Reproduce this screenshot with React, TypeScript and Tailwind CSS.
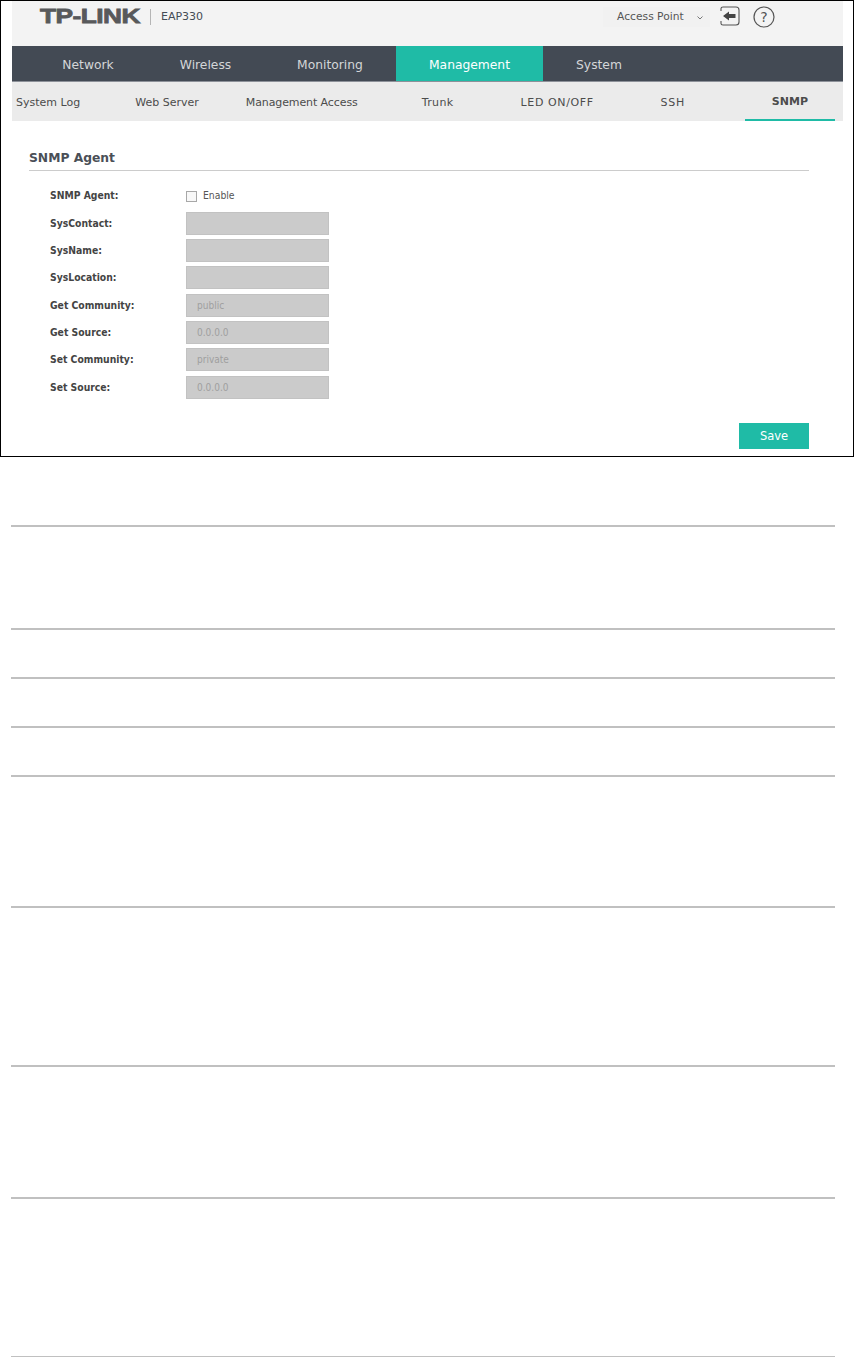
import React from 'react';

const FONT = 'font-["DejaVu_Sans","Liberation_Sans",sans-serif]';
const CONDENSED = "font-['DejaVu_Sans_Condensed','DejaVu_Sans',sans-serif]";

const tabs = [
  { label: 'Network', cls: 'w-[118px]' },
  { label: 'Wireless', cls: 'w-[117px]' },
  { label: 'Monitoring', cls: 'w-[132px]' },
  { label: 'Management', cls: 'w-[147px]' },
  { label: 'System', cls: 'w-[112px]' },
];

const subTabs = [
  { label: 'System Log', cls: 'ml-[4px]' },
  { label: 'Web Server', cls: 'ml-[55px]' },
  { label: 'Management Access', cls: 'ml-[47px] tracking-[-0.1px]' },
  { label: 'Trunk', cls: 'ml-[64px] tracking-[0.4px]' },
  { label: 'LED ON/OFF', cls: 'ml-[67px] tracking-[0.6px]' },
  { label: 'SSH', cls: 'ml-[67px] tracking-[0.7px]' },
];

const fields = [
  { label: 'SysContact:', value: '', cls: 'mt-[10px]' },
  { label: 'SysName:', value: '', cls: 'mt-[4px]' },
  { label: 'SysLocation:', value: '', cls: 'mt-[4px]' },
  { label: 'Get Community:', value: 'public', cls: 'mt-[5px]' },
  { label: 'Get Source:', value: '0.0.0.0', cls: 'mt-[4px]' },
  { label: 'Set Community:', value: 'private', cls: 'mt-[4px]' },
  { label: 'Set Source:', value: '0.0.0.0', cls: 'mt-[5px]' },
];

// heights of the empty table rows below the screenshot frame
const tableRows = ['h-[103px]', 'h-[49px]', 'h-[49px]', 'h-[49px]', 'h-[131px]', 'h-[159px]', 'h-[132px]', 'h-[159px]'];

function Header() {
  return (
    <div className="flex h-[45px] bg-[#f3f3f3] pl-[28px] pt-[6px]">
      <span className="h-[18px] w-[101px] origin-left scale-x-[1.25] font-['Liberation_Sans',sans-serif] text-[21px] leading-[18px] font-bold tracking-[-0.4px] whitespace-nowrap text-[#58595b] [-webkit-text-stroke:0.8px_#58595b]">
        TP-LINK
      </span>
      <div className="mt-[2px] ml-[9px] h-[16px] w-px bg-[#b5b5b5]" />
      <span className="mt-[2px] ml-[10px] text-[11px] leading-[16px] text-[#444b55]">EAP330</span>
      <div className="ml-[400px] flex h-[20px] w-[107px] items-center bg-[#f1f1f1] pl-[14px]">
        <span className="text-[10.7px] text-[#555]">Access Point</span>
        <svg className="mt-[2px] ml-[13px]" width="6" height="4" viewBox="0 0 6 4" fill="none">
          <path d="M0.5 0.5 L3 3 L5.5 0.5" stroke="#777" strokeWidth="1" />
        </svg>
      </div>
      <svg className="-mt-px ml-[10px]" width="20" height="20" viewBox="0 0 20 20" fill="none">
        <path d="M1 5 V2.5 Q1 1 3 1 H16 Q19 1 19 4 V16 Q19 19 16 19 H3 Q1 19 1 17.5 V15" stroke="#555" strokeWidth="1.1" />
        <path d="M3 10 L9 5.5 V8 H15.5 V12 H9 V14.5 Z" fill="#444" />
      </svg>
      <svg className="-mt-px ml-[13px]" width="22" height="22" viewBox="0 0 22 22" fill="none">
        <circle cx="11" cy="11" r="10" stroke="#555" strokeWidth="1.2" />
        <text x="11" y="16" textAnchor="middle" fontSize="14" fill="#555" fontFamily="DejaVu Sans, sans-serif">?</text>
      </svg>
    </div>
  );
}

function MainNav() {
  return (
    <div className="flex h-[36px] border-b border-[#8d9199] bg-[#434a54] pl-[17px]">
      {tabs.map((t) => (
        <div
          key={t.label}
          className={
            t.label === 'Management'
              ? `${t.cls} flex items-center justify-center bg-[#1fbba6] pt-[4px] text-[12.3px] text-white`
              : `${t.cls} flex items-center justify-center pt-[4px] text-[12.3px] text-[#d4d6d8]`
          }
        >
          {t.label}
        </div>
      ))}
    </div>
  );
}

function SubNav() {
  return (
    <div className="flex h-[39px] bg-[#ebebeb] text-[11px] text-[#4c4c4c]">
      {subTabs.map((s) => (
        <div key={s.label} className={`${s.cls} flex items-center pt-[3px] whitespace-nowrap`}>
          {s.label}
        </div>
      ))}
      <div className="ml-[60px] flex w-[90px] items-center justify-center border-b-2 border-[#1fbba6] pt-[3px] font-bold text-[#4c4c4c]">
        SNMP
      </div>
    </div>
  );
}

function SnmpForm() {
  return (
    <div className={`${CONDENSED} h-[334px] pt-[29px] pr-[34px] pl-[17px]`}>
      <div className={`${FONT} h-[21px] border-b border-[#cccccc] text-[12.3px] leading-[16px] font-bold text-[#4a4f57]`}>
        SNMP Agent
      </div>
      <div className="mt-[19px] flex h-[12px] items-center">
        <span className="ml-[21px] w-[136px] text-[10.3px] font-bold text-[#444]">SNMP Agent:</span>
        <span className="h-[11px] w-[11px] border border-[#a8a8a8] bg-[#f8f8f8]" />
        <span className="ml-[6px] text-[10.3px] text-[#555]">Enable</span>
      </div>
      {fields.map((f) => (
        <div key={f.label} className={`${f.cls} flex h-[23px] items-center`}>
          <span className="ml-[21px] w-[136px] text-[10.3px] font-bold text-[#444]">{f.label}</span>
          <div className="flex h-full w-[143px] items-center border border-[#c2c2c2] bg-[#cbcbcb] pl-[10px] text-[10px] text-[#9f9f9f]">
            {f.value}
          </div>
        </div>
      ))}
      <div className="mt-[24px] flex justify-end">
        <button className={`${FONT} h-[26px] w-[70px] bg-[#1fbba6] pt-[2px] text-[11.5px] text-white`}>Save</button>
      </div>
    </div>
  );
}

export default function App() {
  return (
    <div className={`${FONT} h-[1357px] w-[854px] overflow-hidden bg-white`}>
      <div className="h-[457px] border border-black pr-[10px] pl-[11px]">
        <Header />
        <MainNav />
        <SubNav />
        <SnmpForm />
      </div>
      <div className="mt-[68px] ml-[11px] w-[824px]">
        {tableRows.map((h, i) => (
          <div key={i} className={`${h} border-t-2 border-[#c0c0c0]`} />
        ))}
        <div className="h-[2px] bg-[#c0c0c0]" />
      </div>
    </div>
  );
}
